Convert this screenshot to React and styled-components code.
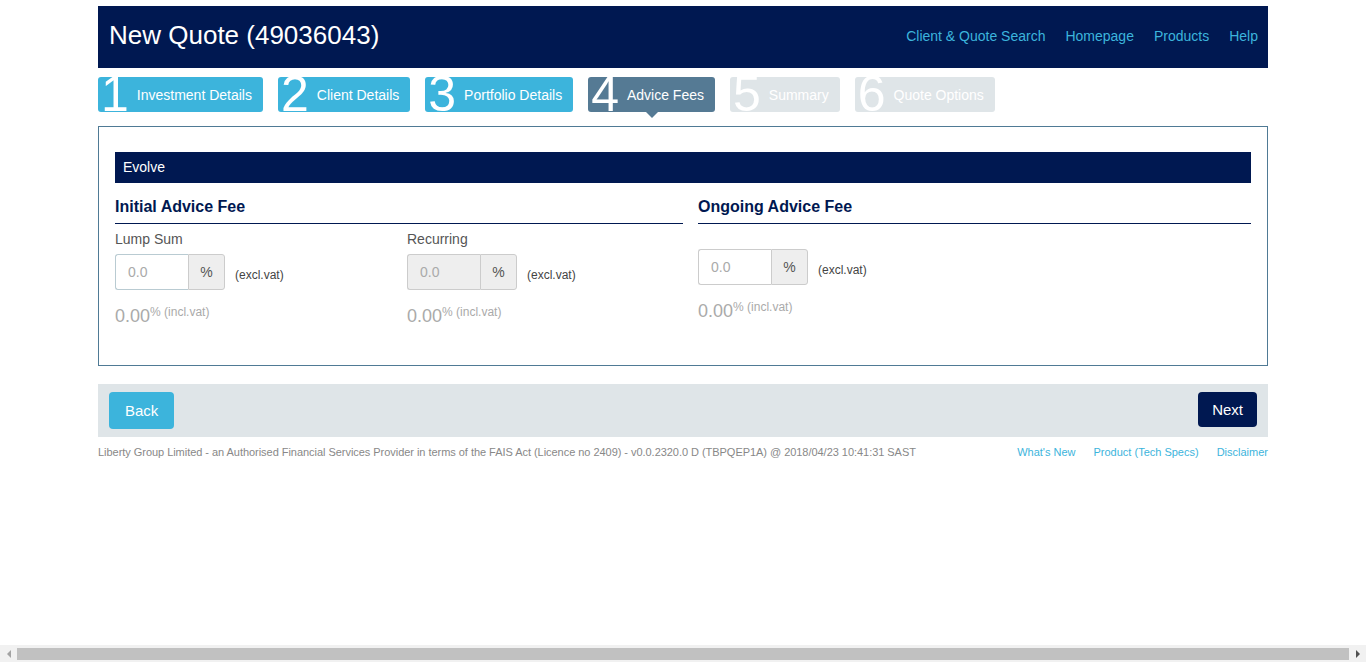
import styled, { createGlobalStyle, css } from "styled-components";

const GlobalStyle = createGlobalStyle`
  html, body {
    margin: 0;
    padding: 0;
    background: #fff;
  }
  body {
    font-family: "Liberation Sans", Arial, sans-serif;
    color: #333;
  }
`;

const NAVY = "#001851";
const BLUE = "#3cb4dc";

const Page = styled.div`
  width: 1170px;
  margin: 0 auto;
  padding-top: 6px;
`;

const Header = styled.header`
  height: 62px;
  background: ${NAVY};
  display: flex;
  align-items: center;
  justify-content: space-between;
  padding: 0 10px 0 11px;
  box-sizing: border-box;
`;

const Title = styled.h1`
  margin: 0 0 4px;
  font-size: 26px;
  font-weight: normal;
  color: #fff;
`;

const Nav = styled.nav`
  display: flex;
  gap: 20px;
  font-size: 14px;
  margin-bottom: 2px;
`;

const NavLink = styled.a`
  color: ${BLUE};
  text-decoration: none;
`;

const Steps = styled.div`
  display: flex;
  gap: 15px;
  margin-top: 9px;
`;

const stepColors = {
  done: BLUE,
  active: "#557a94",
  disabled: "#dfe5e8",
};

const Step = styled.div`
  position: relative;
  height: 35px;
  display: flex;
  align-items: center;
  padding: 0 11px 0 3px;
  border-radius: 3px;
  background: ${(p) => stepColors[p.$state]};
  color: #fff;
  font-size: 14px;
  ${(p) =>
    p.$state === "active" &&
    css`
      &:after {
        content: "";
        position: absolute;
        left: 50%;
        bottom: -6px;
        margin-left: -6px;
        border-left: 6px solid transparent;
        border-right: 6px solid transparent;
        border-top: 6px solid ${stepColors.active};
      }
    `}
`;

const StepNum = styled.span`
  font-size: 50px;
  line-height: 35px;
  height: 35px;
  margin-right: 8px;
  align-self: flex-end;
  padding-top: 4px;
`;

const Panel = styled.section`
  margin-top: 14px;
  border: 1px solid #4f7a95;
  padding: 25px 16px 38px;
`;

const Band = styled.div`
  background: ${NAVY};
  color: #fff;
  height: 31px;
  line-height: 31px;
  padding-left: 8px;
  font-size: 14px;
`;

const Columns = styled.div`
  display: grid;
  grid-template-columns: 568px 1fr;
  gap: 15px;
`;

const SubColumns = styled.div`
  display: grid;
  grid-template-columns: 292px 1fr;
`;

const Heading = styled.h3`
  margin: 15px 0 0;
  padding-bottom: 7px;
  border-bottom: 1px solid ${NAVY};
  font-size: 16px;
  line-height: 18px;
  color: ${NAVY};
  font-weight: bold;
`;

const Field = styled.div`
  padding-top: ${(p) => (p.$bare ? "25px" : "6px")};
`;

const Label = styled.div`
  font-size: 14px;
  color: #555;
  line-height: 18px;
  margin-bottom: 6px;
`;

const InputRow = styled.div`
  display: flex;
  align-items: center;
`;

const Group = styled.div`
  display: flex;
  height: 36px;
  box-sizing: border-box;
`;

const Input = styled.input`
  width: 73px;
  box-sizing: border-box;
  border: 1px solid ${(p) => (p.$focus ? "#b9cbd2" : "#ccc")};
  border-right: none;
  border-radius: 3px 0 0 3px;
  padding: 0 12px;
  font: 14px "Liberation Sans", Arial, sans-serif;
  color: #555;
  background: ${(p) => (p.disabled ? "#eee" : "#fff")};
  outline: none;
  &::placeholder {
    color: #aaa;
  }
`;

const Addon = styled.span`
  width: 37px;
  box-sizing: border-box;
  display: flex;
  align-items: center;
  justify-content: center;
  background: #eee;
  border: 1px solid #ccc;
  border-radius: 0 3px 3px 0;
  font-size: 14px;
  color: #555;
`;

const Note = styled.span`
  font-size: 12px;
  color: #444;
  margin: 6px 0 0 10px;
`;

const Total = styled.div`
  margin-top: 15px;
  color: #aaa;
  font-size: 18px;
  line-height: 22px;
  sup {
    font-size: 12px;
    vertical-align: 6px;
    line-height: 0;
  }
`;

const ButtonBar = styled.div`
  margin-top: 18px;
  height: 53px;
  background: #dfe5e8;
  display: flex;
  justify-content: space-between;
  align-items: flex-start;
  padding: 8px 11px;
  box-sizing: border-box;
`;

const Button = styled.button`
  border: none;
  border-radius: 4px;
  color: #fff;
  font: 15px "Liberation Sans", Arial, sans-serif;
  cursor: pointer;
  background: ${(p) => (p.$primary ? NAVY : BLUE)};
  height: ${(p) => (p.$primary ? "35px" : "37px")};
  padding: 0 ${(p) => (p.$primary ? "14px" : "16px")};
`;

const Footer = styled.footer`
  display: flex;
  justify-content: space-between;
  margin-top: 9px;
  font-size: 11px;
  color: #888;
`;

const Legal = styled.span`
  letter-spacing: -0.04px;
`;

const FooterLinks = styled.div`
  display: flex;
  gap: 18px;
`;

const FooterLink = styled.a`
  color: ${BLUE};
  text-decoration: none;
`;

// browser's horizontal scrollbar, as seen in the screenshot
const ScrollBar = styled.div`
  position: fixed;
  left: 0;
  right: 0;
  bottom: 0;
  height: 17px;
  background: #f1f1f1;
  display: flex;
  align-items: center;
  padding: 0 2px;
  box-sizing: border-box;
`;

const ScrollArrow = styled.span`
  width: 13px;
  display: flex;
  justify-content: center;
  &:after {
    content: "";
    border-top: 4px solid transparent;
    border-bottom: 4px solid transparent;
    ${(p) =>
      p.$right
        ? "border-left: 4px solid #505050;"
        : "border-right: 4px solid #a3a3a3;"}
  }
`;

const ScrollThumb = styled.span`
  flex: 1;
  height: 12px;
  margin: 0 2px;
  background: #c1c1c1;
`;

const steps = [
  ["1", "Investment Details", "done"],
  ["2", "Client Details", "done"],
  ["3", "Portfolio Details", "done"],
  ["4", "Advice Fees", "active"],
  ["5", "Summary", "disabled"],
  ["6", "Quote Options", "disabled"],
];

function FeeInput({ label, disabled, focus, bare }) {
  return (
    <Field $bare={bare}>
      {label && <Label>{label}</Label>}
      <InputRow>
        <Group>
          <Input placeholder="0.0" disabled={disabled} $focus={focus} />
          <Addon>%</Addon>
        </Group>
        <Note>(excl.vat)</Note>
      </InputRow>
      <Total>
        0.00<sup>% (incl.vat)</sup>
      </Total>
    </Field>
  );
}

export default function App() {
  return (
    <>
      <GlobalStyle />
      <Page>
        <Header>
          <Title>New Quote (49036043)</Title>
          <Nav>
            <NavLink href="#">Client &amp; Quote Search</NavLink>
            <NavLink href="#">Homepage</NavLink>
            <NavLink href="#">Products</NavLink>
            <NavLink href="#">Help</NavLink>
          </Nav>
        </Header>

        <Steps>
          {steps.map(([n, text, state]) => (
            <Step key={n} $state={state}>
              <StepNum>{n}</StepNum>
              {text}
            </Step>
          ))}
        </Steps>

        <Panel>
          <Band>Evolve</Band>
          <Columns>
            <div>
              <Heading>Initial Advice Fee</Heading>
              <SubColumns>
                <FeeInput label="Lump Sum" focus />
                <FeeInput label="Recurring" disabled />
              </SubColumns>
            </div>
            <div>
              <Heading>Ongoing Advice Fee</Heading>
              <FeeInput bare />
            </div>
          </Columns>
        </Panel>

        <ButtonBar>
          <Button>Back</Button>
          <Button $primary>Next</Button>
        </ButtonBar>

        <Footer>
          <Legal>
            Liberty Group Limited - an Authorised Financial Services Provider in
            terms of the FAIS Act (Licence no 2409) - v0.0.2320.0 D (TBPQEP1A) @
            2018/04/23 10:41:31 SAST
          </Legal>
          <FooterLinks>
            <FooterLink href="#">What's New</FooterLink>
            <FooterLink href="#">Product (Tech Specs)</FooterLink>
            <FooterLink href="#">Disclaimer</FooterLink>
          </FooterLinks>
        </Footer>
      </Page>
      <ScrollBar>
        <ScrollArrow />
        <ScrollThumb />
        <ScrollArrow $right />
      </ScrollBar>
    </>
  );
}
